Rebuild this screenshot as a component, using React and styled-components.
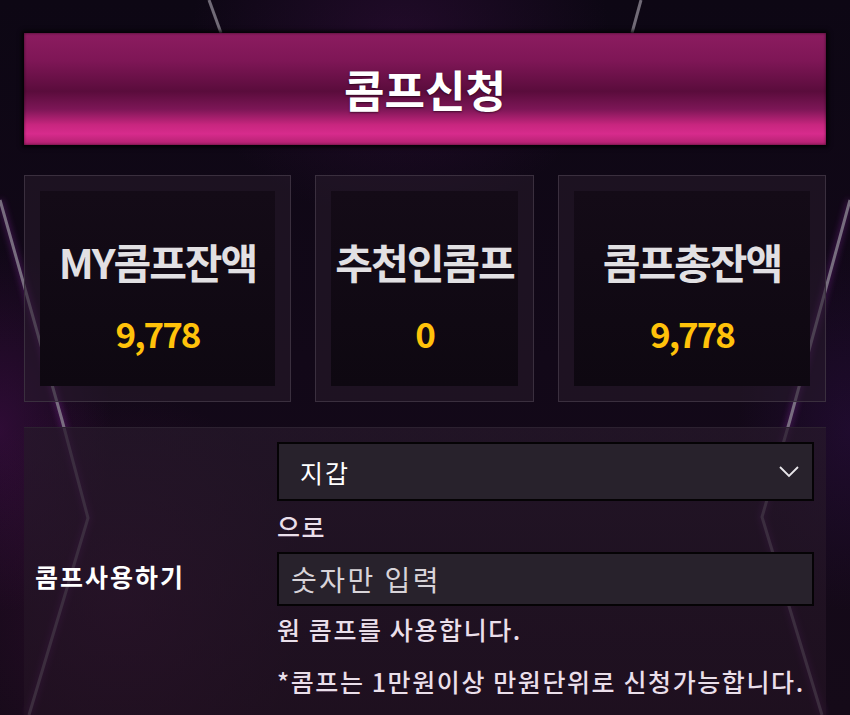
import React from "react";
import styled, { createGlobalStyle } from "styled-components";

const Global = createGlobalStyle`
  html, body { margin: 0; padding: 0; }
  body {
    background: #0c0610;
    font-family: "Noto Sans CJK KR", "Noto Sans", sans-serif;
    width: 850px;
    height: 715px;
    overflow: hidden;
  }
`;

const Page = styled.div`
  position: relative;
  width: 850px;
  height: 715px;
  overflow: hidden;
  background:
    radial-gradient(ellipse 300px 260px at 400px 40px, rgba(80, 20, 90, 0.3), transparent 70%),
    radial-gradient(ellipse 260px 300px at 120px 600px, rgba(90, 20, 80, 0.3), transparent 70%),
    radial-gradient(ellipse 160px 260px at 0px 430px, rgba(110, 20, 120, 0.3), transparent 70%),
    radial-gradient(ellipse 160px 260px at 850px 430px, rgba(70, 20, 110, 0.25), transparent 70%),
    linear-gradient(180deg, #0d0714 0%, #120818 50%, #150a18 100%);
`;

const Lines = styled.svg`
  position: absolute;
  inset: 0;
  pointer-events: none;
`;

const Content = styled.div`
  position: relative;
  display: flex;
  flex-direction: column;
  padding: 33px 24px 0 24px;
`;

const Header = styled.div`
  height: 112px;
  display: flex;
  align-items: center;
  justify-content: center;
  background: linear-gradient(
    180deg,
    #8c1c60 0%,
    #7e1656 25%,
    #5a0c3c 52%,
    #7c1656 68%,
    #c8267f 82%,
    #d72b8c 90%,
    #b0206f 100%
  );
  box-shadow: 0 0 4px 2px rgba(0, 0, 0, 0.9), inset 0 0 3px rgba(0, 0, 0, 0.6);
`;

const Title = styled.h1`
  margin: 0;
  color: #ffffff;
  font-size: 44px;
  font-weight: 700;
  letter-spacing: 0;
  text-shadow: 0 1px 2px rgba(0, 0, 0, 0.5);
`;

const Stats = styled.div`
  margin-top: 30px;
  display: grid;
  grid-template-columns: 267px 219px 1fr;
  gap: 24px;
  height: 227px;
`;

const StatBox = styled.div`
  border: 1px solid #3a2f3e;
  background: rgba(40, 28, 44, 0.55);
  padding: 15px;
  display: flex;
`;

const StatInner = styled.div`
  flex: 1;
  background: linear-gradient(180deg, #140b17 0%, #0e0811 100%);
  display: flex;
  flex-direction: column;
  align-items: center;
  justify-content: center;
  gap: 29px;
  padding-top: 14px;
`;

const StatLabel = styled.div`
  color: #e2e0e3;
  font-size: 41px;
  font-weight: 700;
  letter-spacing: -2px;
  line-height: 46px;
`;

const StatValue = styled.div`
  color: #ffc20a;
  font-size: 35px;
  font-weight: 700;
  letter-spacing: -2px;
  line-height: 40px;
`;

const Panel = styled.div`
  margin-top: 25px;
  border-top: 1px solid #2c2130;
  background: linear-gradient(180deg, rgba(38, 24, 42, 0.75) 0%, rgba(34, 18, 34, 0.7) 100%);
  display: grid;
  grid-template-columns: 242px 1fr;
  align-items: center;
  padding: 14px 12px 6px 11px;
`;

const UseLabel = styled.div`
  color: #ffffff;
  font-size: 25px;
  font-weight: 700;
  letter-spacing: 2px;
`;

const Form = styled.div`
  display: flex;
  flex-direction: column;
`;

const SelectBox = styled.div`
  height: 55px;
  border: 2px solid #050305;
  background: #28222c;
  display: flex;
  align-items: center;
  justify-content: space-between;
  padding: 0 12px 0 21px;
  color: #ffffff;
  font-size: 25px;
  letter-spacing: 2px;
`;

const Note = styled.div`
  color: #eadfea;
  font-size: 25px;
  font-weight: 500;
  letter-spacing: 1.6px;
  line-height: ${(p) => p.$lh || "46px"};
`;

const InputBox = styled.div`
  height: 50px;
  border: 2px solid #050305;
  background: #28222c;
  display: flex;
  align-items: center;
  padding: 0 12px;
  color: #d8d4d9;
  font-size: 28px;
  letter-spacing: 2.5px;
`;

const Chevron = () => (
  <svg width="22" height="14" viewBox="0 0 22 14">
    <path d="M2 2 L11 11 L20 2" fill="none" stroke="#e8e6ea" strokeWidth="1.8" />
  </svg>
);

const stats = [
  { label: "MY콤프잔액", value: "9,778" },
  { label: "추천인콤프", value: "0" },
  { label: "콤프총잔액", value: "9,778" },
];

export default function App() {
  return (
    <>
      <Global />
      <Page>
        <Lines width="850" height="715" viewBox="0 0 850 715">
          <defs>
            <filter id="glow" x="-50%" y="-50%" width="200%" height="200%">
              <feGaussianBlur stdDeviation="3" />
            </filter>
          </defs>
          <g filter="url(#glow)" stroke="#a030c0" strokeWidth="6" fill="none" opacity="0.3">
            <polyline points="0,200 62,420 88,518 29,715" />
            <polyline points="850,200 790,420 762,517 822,715" />
          </g>
          <g stroke="#8a8490" strokeWidth="3" fill="none" opacity="0.8">
            <polyline points="0,200 62,420 88,518 29,715" />
            <polyline points="850,200 790,420 762,517 822,715" />
            <line x1="209" y1="0" x2="221" y2="33" />
            <line x1="641" y1="0" x2="632" y2="33" />
          </g>
        </Lines>
        <Content>
          <Header>
            <Title>콤프신청</Title>
          </Header>
          <Stats>
            {stats.map((s) => (
              <StatBox key={s.label}>
                <StatInner>
                  <StatLabel>{s.label}</StatLabel>
                  <StatValue>{s.value}</StatValue>
                </StatInner>
              </StatBox>
            ))}
          </Stats>
          <Panel>
            <UseLabel>콤프사용하기</UseLabel>
            <Form>
              <SelectBox>
                <span>지갑</span>
                <Chevron />
              </SelectBox>
              <Note $lh="51px">으로</Note>
              <InputBox>숫자만 입력</InputBox>
              <Note>원 콤프를 사용합니다.</Note>
              <Note $lh="58px">*콤프는 1만원이상 만원단위로 신청가능합니다.</Note>
            </Form>
          </Panel>
        </Content>
      </Page>
    </>
  );
}
